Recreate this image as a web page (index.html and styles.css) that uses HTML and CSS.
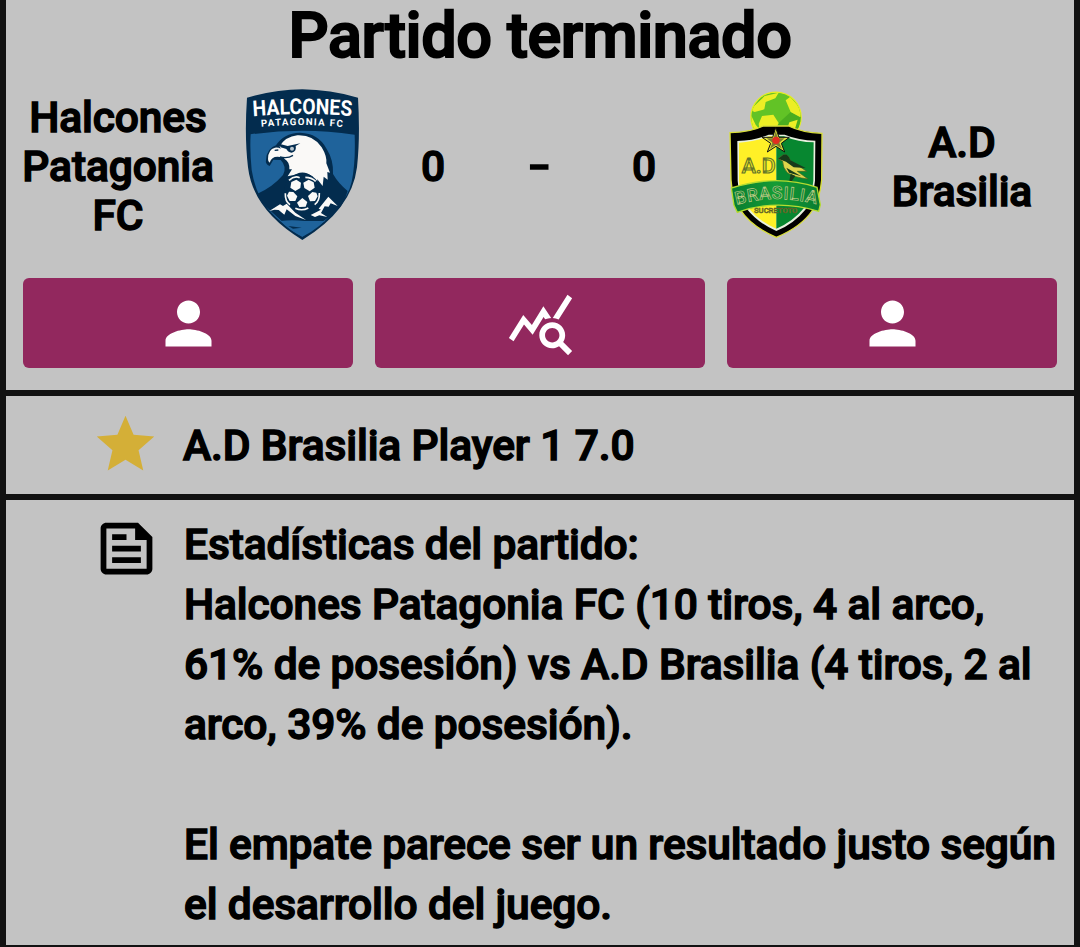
FILE: index.html
```html
<!DOCTYPE html>
<html lang="es">
<head>
  <meta charset="UTF-8" />
  <meta name="viewport" content="width=device-width, initial-scale=1.0" />
  <title>Partido terminado</title>
  <link rel="stylesheet" href="styles.css">
</head>
<body>
  <header class="panel match">
    <h1>Partido terminado</h1>

    <div class="teams">
      <div class="team-name">Halcones Patagonia FC</div>
      <svg class="crest" width="135" height="170" viewBox="0 0 405 510">
        <path fill="#032c4e" d="M36 53Q120 29 202 28Q285 29 369 53Q376 170 366 262Q350 390 202 480Q54 390 39 262Q28 170 36 53Z"/>
        <path fill="#1f639b" d="M47 163Q125 152 202 152Q280 152 359 164Q362 250 350 305Q341 350 300 390Q255 445 202 470Q145 440 100 388Q62 345 50 270Q44 210 47 163Z"/>
        <path fill="#032c4e" d="M93 240Q95 205 123 196Q145 160 195 158Q252 160 275 207Q296 240 294 282Q310 310 338 333Q325 380 292 404L265 423H140L94 381Q74 360 66 342Q112 322 144 285Q157 260 137 240L115 239L104 258Q90 252 93 240Z"/>
        <path fill="#faf9f7" d="M134 199Q151 170 187 166Q235 164 260 202Q276 228 274 250L285 278L277 276L278 299L266 290L263 318L247 298L246 311L232 289Q214 274 194 278L176 285L158 289L171 268L163 268Q165 246 148 236Z"/>
        <path fill="#faf9f7" d="M99 237Q99 208 120 203Q138 201 148 219L160 229Q151 236 136 231Q111 226 104 248Q99 246 99 237Z"/>
        <path fill="#032c4e" d="M132 191L158 198L196 190L182 198Q186 214 170 218Q158 216 154 207L137 202Z"/>
        <circle cx="171" cy="206" r="6" fill="#b9c6ce"/>
        <path fill="none" stroke="#032c4e" stroke-width="4" d="M135 231Q158 237 174 226M119 211L130 210"/>
        <path fill="#faf9f7" d="M103 393L135 373L144 378L155 371L181 398L213 420L181 408L155 388L148 404L131 390L119 389ZM227 405L258 389L251 386L280 350L308 378L287 370L281 380L269 379L258 399L277 411L253 406L240 411Z"/>
        <circle cx="202" cy="335" r="55" fill="#032c4e"/>
        <path fill="#faf9f7" d="M184 299L198 308L196 324L181 333L166 323L169 306ZM205 308L221 299L236 307L239 323L224 334L208 324ZM162 335L175 336L187 349L181 363L164 363L156 347ZM219 348L232 336L244 338L248 349L240 363L225 364ZM202 354L217 366L212 380L193 381L186 368Z"/>
        <path fill="none" stroke="#faf9f7" stroke-width="5" d="M162 301Q178 286 194 293M211 292Q230 292 242 304M151 340Q150 365 165 374M253 339Q254 363 239 374M181 385Q201 394 220 384"/>
        <path fill="#1f639b" d="M137 423Q170 418 208 423H270L202 470Q165 453 137 423Z"/>
        <path fill="#032c4e" d="M160 438L200 443L174 446Z"/>
        <g fill="#fff" font-weight="700" text-anchor="middle">
          <path id="arc1" fill="none" d="M0 112Q202 92 405 112"/>
          <path id="arc2" fill="none" d="M55 143Q202 127 350 144"/>
          <text font-size="65" transform="translate(22 0) scale(.89 1)"><textPath href="#arc1" startOffset="50%">HALCONES</textPath></text>
          <text font-size="29" letter-spacing="4"><textPath href="#arc2" startOffset="50%">PATAGONIA FC</textPath></text>
        </g>
      </svg>
      <div class="score">0</div>
      <div class="score dash"><span>-</span></div>
      <div class="score">0</div>
      <svg class="crest" width="125" height="170" viewBox="-4 0 375 510">
        <defs>
          <clipPath id="ball"><circle cx="182" cy="112" r="74"/></clipPath>
          <linearGradient id="ribbon" x1="0" x2="1">
            <stop offset="0" stop-color="#087c31"/><stop offset=".5" stop-color="#159c35"/><stop offset="1" stop-color="#087c31"/>
          </linearGradient>
        </defs>
        <circle cx="182" cy="112" r="75" fill="#3fa526" stroke="#e6ee21" stroke-width="5"/>
        <g clip-path="url(#ball)">
          <path fill="#62c326" d="M107 38H257V188H107Z"/>
          <path fill="#4bad20" d="M190 129L226 96L258 112V160H184Z"/>
          <path fill="#ecee25" d="M148 48L190 38L180 55L151 66L147 88L118 96L104 90ZM211 61L225 50L260 91L255 112L226 96ZM140 108L174 104L190 129L180 149L133 150L130 132ZM107 105L121 134L137 153L108 150ZM222 127L247 119L238 150L213 153Z"/>
        </g>
        <path fill="#000" stroke="#d9df38" stroke-width="4" d="M44 158Q105 157 144 138H220Q260 158 320 160L319 300Q314 355 292 390Q259 440 183 472Q108 440 74 388Q50 350 47 300Z"/>
        <path fill="#e8f1df" d="M66 183Q120 181 160 164H208Q250 181 300 182L299 302Q294 355 270 389Q236 431 183 453Q128 429 94 386Q69 347 67 302Z"/>
        <path fill="#fff027" d="M71 188Q120 185 160 169H183V446Q132 425 99 384Q73 349 71 302Z"/>
        <path fill="#078730" d="M183 169H206Q250 187 295 187L294 302Q290 349 266 384Q233 425 183 446Z"/>
        <path fill="#e1e63a" stroke="#111" stroke-width="3" d="M181 143L191 172L222 172L198 190L208 216L182 199L156 216L166 190L140 172L172 172Z"/>
        <path fill="#7d7c30" d="M181 153L188 175H208L192 188L200 206L182 194L164 206L171 188L154 175H175Z"/>
        <circle cx="182" cy="181" r="11" fill="#e22e20"/>
        <text x="130" y="278" font-size="59" text-anchor="middle" textLength="102" lengthAdjust="spacingAndGlyphs" fill="#e4e326" stroke="#65752a" stroke-width="3">A.D</text>
        <path fill="#dfd64b" stroke="#425e20" stroke-width="2" d="M188 236L203 225Q219 221 225 242L249 257L274 274L246 274L278 297Q236 292 216 278Q202 263 202 244Z"/>
        <path fill="#183b1a" d="M188 236L204 224Q219 220 225 241L271 264L235 262L212 245ZM213 263L258 289L221 278ZM226 281L221 308L210 306H239L230 302L240 288Z"/>
        <path fill="url(#ribbon)" stroke="#b5dc30" stroke-width="4" d="M48 324Q182 281 305 322L315 374L310 394Q182 355 66 397L56 376Z"/>
        <path id="arc3" fill="none" d="M52 378Q183 338 316 376"/>
        <text font-size="53" font-weight="500" text-anchor="middle" letter-spacing="2" fill="#16863a" stroke="#becc84" stroke-width="2"><textPath href="#arc3" startOffset="50%">BRASILIA</textPath></text>
        <text x="181" y="399" font-size="24" text-anchor="middle" textLength="130" lengthAdjust="spacingAndGlyphs" fill="#8d8e30" stroke="#5a5b24" stroke-width="1.5">SUCRETOTO</text>
      </svg>
      <div class="team-name">A.D Brasilia</div>
    </div>

    <nav class="actions">
      <button aria-label="Local">
        <svg class="icon" viewBox="0 0 24 24"><path d="M12 12c2.21 0 4-1.79 4-4s-1.79-4-4-4-4 1.79-4 4 1.79 4 4 4zm0 2c-2.67 0-8 1.34-8 4v2h16v-2c0-2.66-5.33-4-8-4z"/></svg>
      </button>
      <button aria-label="Estadísticas">
        <svg class="icon" viewBox="0 0 24 24"><path d="M19.88 18.47c.44-.7.7-1.51.7-2.39 0-2.49-2.01-4.5-4.5-4.5s-4.5 2.01-4.5 4.5 2.01 4.5 4.49 4.5c.88 0 1.7-.26 2.39-.7L21.58 23 23 21.58l-3.12-3.11zm-3.8.11c-1.38 0-2.5-1.12-2.5-2.5s1.12-2.5 2.5-2.5 2.5 1.12 2.5 2.5-1.12 2.5-2.5 2.5zm-.36-8.5c-.74.02-1.45.18-2.1.45l-.55-.83-3.8 6.18-3.01-3.52-3.63 5.81L1 17l5-8 3 3.5L13 6l2.72 4.08zm2.59.5c-.64-.28-1.33-.45-2.05-.49L21.38 2 23 3.18l-4.69 7.4z"/></svg>
      </button>
      <button aria-label="Visitante">
        <svg class="icon" viewBox="0 0 24 24"><path d="M12 12c2.21 0 4-1.79 4-4s-1.79-4-4-4-4 1.79-4 4 1.79 4 4 4zm0 2c-2.67 0-8 1.34-8 4v2h16v-2c0-2.66-5.33-4-8-4z"/></svg>
      </button>
    </nav>
  </header>

  <section class="panel best-player">
    <svg class="icon star" viewBox="0 0 24 24"><path d="M12 17.27L18.18 21l-1.64-7.03L22 9.24l-7.19-.61L12 2 9.19 8.63 2 9.24l5.46 4.73L5.82 21z"/></svg>
    <span>A.D Brasilia Player 1 7.0</span>
  </section>

  <section class="panel report">
    <svg class="icon" viewBox="0 0 24 24"><path d="M16 3H5c-1.1 0-2 .9-2 2v14c0 1.1.9 2 2 2h14c1.1 0 2-.9 2-2V8l-5-5zm3 16H5V5h10v4h4v10zM7 15h10v2H7zm0-8h5v2H7zm0 4h10v2H7z"/></svg>
    <div class="report-text">
      <p>Estadísticas del partido:<br>Halcones Patagonia FC (10 tiros, 4 al arco,<br>61% de posesión) vs A.D Brasilia (4 tiros, 2 al<br>arco, 39% de posesión).</p>
      <p>El empate parece ser un resultado justo según<br>el desarrollo del juego.</p>
    </div>
  </section>
</body>
</html>
```
FILE: styles.css
```css
* {
  box-sizing: border-box;
}
body {
  margin: 0;
  padding: 0 6px 2px;
  height: 947px;
  background: #121212;
  color: #000;
  font-family: Roboto, sans-serif;
  font-size: 42.5px;
  font-weight: 500;
  letter-spacing: -0.12px;
  -webkit-text-stroke: 1.4px #000;
  display: flex;
  flex-direction: column;
  gap: 6px;
  overflow: hidden;
}
.panel {
  background: #c3c3c3;
}
.match {
  height: 390px;
  flex: none;
  padding: 0 17px;
}
h1 {
  margin: 0;
  height: 80px;
  font-size: 63px;
  font-weight: 500;
  letter-spacing: -0.4px;
  -webkit-text-stroke-width: 2px;
  line-height: 72px;
  text-align: center;
}
.teams {
  display: grid;
  grid-template-columns: 190px 178px 84px 128px 82px 182px 190px;
  height: 198px;
  line-height: 49px;
  text-align: center;
}
.team-name,
.score {
  height: 173px;
  display: flex;
  align-items: center;
  justify-content: center;
}
.dash span {
  transform: translateY(-1px) scaleX(1.5);
}
.crest {
  justify-self: center;
  letter-spacing: 0;
  -webkit-text-stroke: 0;
}
.actions {
  display: flex;
  gap: 22px;
}
button {
  flex: 1;
  height: 90px;
  padding: 0;
  border: none;
  border-radius: 6px;
  background: #92285e;
  color: #fff;
  display: flex;
  align-items: center;
  justify-content: center;
}
.icon {
  width: 69px;
  height: 69px;
  fill: currentColor;
  flex: none;
}
.best-player {
  height: 98px;
  flex: none;
  padding-left: 85px;
  display: flex;
  align-items: center;
  gap: 23px;
}
.star {
  margin-bottom: 1px;
  color: #d4af37;
}
.report {
  flex: 1;
  padding: 14px 0 0 86px;
  display: flex;
  gap: 23px;
}
.report-text {
  padding-top: 1px;
  line-height: 60px;
  white-space: nowrap;
}
p {
  margin: 0;
}
p + p {
  margin-top: 60px;
}
```
